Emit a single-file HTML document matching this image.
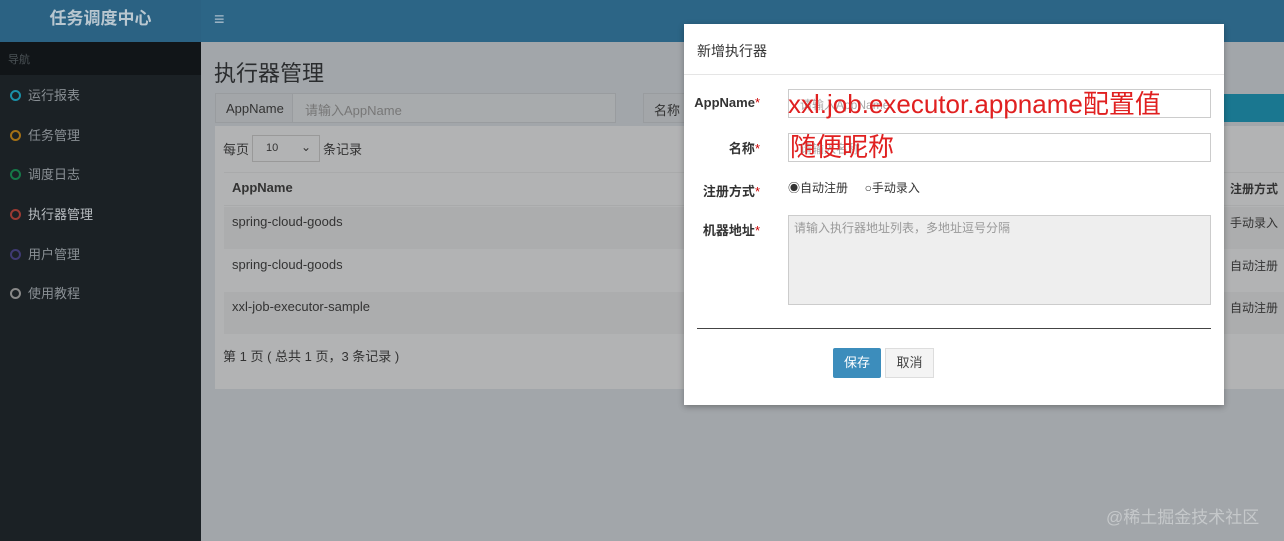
<!DOCTYPE html>
<html><head><meta charset="utf-8"><style>
*{margin:0;padding:0;box-sizing:border-box}
body{width:1284px;height:541px;overflow:hidden;position:relative;background:#a2a6aa;font-family:"Liberation Sans","Noto Sans CJK SC",sans-serif;font-size:13px;color:#333}
.a{position:absolute}
.side{left:0;top:0;width:201px;height:541px;background:#1b2125}
.logo{left:0;top:0;width:201px;height:42px;background:#2b6283;color:#b9c7d0;font-weight:bold;font-size:17px;text-align:center;line-height:38px}
.top{left:201px;top:0;width:1083px;height:42px;background:#2c6586}
.nav{left:0;top:42px;width:201px;height:33px;background:#111518;color:#4b5256;font-size:11px;padding:9px 8px}
.mi{left:10px;color:#8a9095;font-size:13px}
.mi i{display:inline-block;width:11px;height:11px;border:2px solid;border-radius:50%;margin-right:7px;vertical-align:-1px}
.box{background:#b2b3b4}
.modal{left:684px;top:24px;width:540px;height:381px;background:#fff;box-shadow:0 2px 6px rgba(0,0,0,.3)}
.lbl{font-weight:bold;font-size:13px;color:#333;text-align:right;width:76px}
.lbl b{color:#c00;font-weight:normal}
.inp{border:1px solid #ccc;background:#fff}
.red{color:#e02020;font-size:26px}
</style></head><body>
<div class="a side"></div>
<div class="a logo">任务调度中心</div>
<div class="a top"><span style="position:absolute;left:13px;top:9px;color:#a9bccb;font-size:18px">≡</span></div>
<div class="a nav">导航</div>
<div class="a mi" style="top:85px"><i style="color:#1b8fa6"></i>运行报表</div>
<div class="a mi" style="top:125px"><i style="color:#a37016"></i>任务管理</div>
<div class="a mi" style="top:164px"><i style="color:#167848"></i>调度日志</div>
<div class="a mi" style="top:204px;color:#b9bec2"><i style="color:#9b3a33"></i>执行器管理</div>
<div class="a mi" style="top:244px"><i style="color:#3f3a72"></i>用户管理</div>
<div class="a mi" style="top:283px"><i style="color:#888"></i>使用教程</div>

<div class="a" style="left:214px;top:56px;font-size:22px;color:#2a2c2e">执行器管理</div>
<div class="a" style="left:215px;top:93px;width:401px;height:30px;border:1px solid #999c9f;background:#a8abad"></div>
<div class="a" style="left:215px;top:93px;width:78px;height:30px;border:1px solid #999c9f;background:#a3a6a9;color:#333;padding:7px 10px">AppName</div>
<div class="a" style="left:305px;top:100px;color:#777">请输入AppName</div>
<div class="a" style="left:643px;top:93px;width:50px;height:30px;border:1px solid #999c9f;background:#a3a6a9;padding:6px 10px">名称</div>
<div class="a" style="left:1224px;top:94px;width:60px;height:28px;background:#1a7790"></div>
<div class="a box" style="left:215px;top:126px;width:1069px;height:263px"></div>
<div class="a" style="left:223px;top:139px">每页</div>
<div class="a" style="left:252px;top:135px;width:68px;height:27px;border:1px solid #999;font-size:11px;padding:6px 13px">10<span style="position:absolute;right:8px;top:4px;font-size:12px">⌄</span></div>
<div class="a" style="left:323px;top:139px">条记录</div>
<div class="a" style="left:224px;top:172px;width:1060px;height:34px;border-top:1px solid #a9aaab;border-bottom:1px solid #a9aaab"></div>
<div class="a" style="left:232px;top:180px;font-weight:bold">AppName</div>
<div class="a" style="left:224px;top:207px;width:1060px;height:42px;background:#acadae"></div>
<div class="a" style="left:224px;top:292px;width:1060px;height:42px;background:#acadae"></div>
<div class="a" style="left:232px;top:214px">spring-cloud-goods</div>
<div class="a" style="left:232px;top:257px">spring-cloud-goods</div>
<div class="a" style="left:232px;top:299px">xxl-job-executor-sample</div>
<div class="a" style="left:1230px;top:180px;font-weight:bold;font-size:12px">注册方式</div>
<div class="a" style="left:1230px;top:214px;font-size:12px">手动录入</div>
<div class="a" style="left:1230px;top:257px;font-size:12px">自动注册</div>
<div class="a" style="left:1230px;top:299px;font-size:12px">自动注册</div>
<div class="a" style="left:223px;top:346px">第 1 页 ( 总共 1 页，3 条记录 )</div>
<div class="a" style="left:1106px;top:503px;font-size:17px;color:#c5c8ca">@稀土掘金技术社区</div>

<div class="a modal">
 <div class="a" style="left:13px;top:17px;font-size:14px;color:#333">新增执行器</div>
 <div class="a" style="left:0;top:50px;width:540px;border-top:1px solid #e5e5e5"></div>
 <div class="a lbl" style="left:0;top:71px">AppName<b>*</b></div>
 <div class="a inp" style="left:104px;top:65px;width:423px;height:29px"></div>
 <div class="a" style="left:116px;top:72px;color:#aaa;font-size:12px">请输入AppName</div>
 <div class="a red" style="left:104px;top:60px">xxl.job.executor.appname配置值</div>
 <div class="a lbl" style="left:0;top:114px">名称<b>*</b></div>
 <div class="a inp" style="left:104px;top:109px;width:423px;height:29px"></div>
 <div class="a" style="left:116px;top:116px;color:#aaa;font-size:12px">请输入名称</div>
 <div class="a red" style="left:106px;top:103px">随便昵称</div>
 <div class="a lbl" style="left:0;top:157px">注册方式<b>*</b></div>
 <div class="a" style="left:104px;top:155px;font-size:12px">◉自动注册 &nbsp;&nbsp;&nbsp;&nbsp;○手动录入</div>
 <div class="a lbl" style="left:0;top:196px">机器地址<b>*</b></div>
 <div class="a" style="left:104px;top:191px;width:423px;height:90px;border:1px solid #ccc;background:#eee;color:#999;font-size:12px;padding:3px 5px">请输入执行器地址列表，多地址逗号分隔</div>
 <div class="a" style="left:13px;top:304px;width:514px;border-top:1px solid #444"></div>
 <div class="a" style="left:149px;top:324px;width:48px;height:30px;background:#3c8dbc;color:#fff;border-radius:2px;text-align:center;line-height:29px">保存</div>
 <div class="a" style="left:201px;top:324px;width:49px;height:30px;background:#f4f4f4;border:1px solid #ddd;color:#444;text-align:center;line-height:28px">取消</div>
</div>
</body></html>
